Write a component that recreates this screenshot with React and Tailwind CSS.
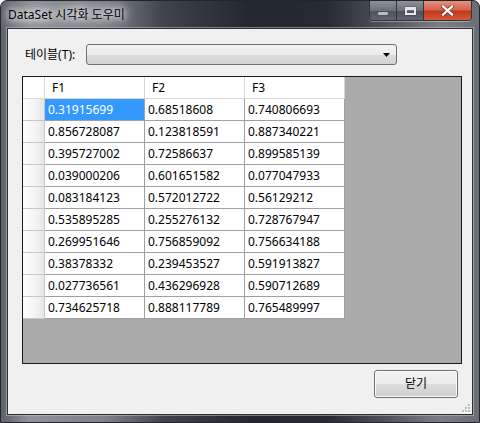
import React from "react";

const rows = [
  ["0.31915699", "0.68518608", "0.740806693"],
  ["0.856728087", "0.123818591", "0.887340221"],
  ["0.395727002", "0.72586637", "0.899585139"],
  ["0.039000206", "0.601651582", "0.077047933"],
  ["0.083184123", "0.572012722", "0.56129212"],
  ["0.535895285", "0.255276132", "0.728767947"],
  ["0.269951646", "0.756859092", "0.756634188"],
  ["0.38378332", "0.239453527", "0.591913827"],
  ["0.027736561", "0.436296928", "0.590712689"],
  ["0.734625718", "0.888117789", "0.765489997"],
];

const font = { fontFamily: '"Noto Sans", "Noto Sans CJK KR", sans-serif' };

const CaptionButtons = () => (
  <div className="absolute right-[7px] top-0 flex h-[20px] overflow-hidden rounded-b-[4px] border border-t-0 border-[#30343a] shadow-[0_1px_0_rgba(255,255,255,0.35)]">
    {/* minimize */}
    <div className="flex w-[27px] items-center justify-center border-r border-[#30343a] bg-[linear-gradient(180deg,#8d9298_0%,#6c7177_50%,#4e535a_51%,#5f646b_100%)]">
      <div className="mt-[5px] h-[3px] w-[10px] rounded-[1px] bg-[#b9bcc0] shadow-[0_0_1px_#222]" />
    </div>
    {/* maximize */}
    <div className="flex w-[27px] items-center justify-center border-r border-[#30343a] bg-[linear-gradient(180deg,#8d9298_0%,#6c7177_50%,#4e535a_51%,#5f646b_100%)]">
      <div className="h-[8px] w-[11px] border-2 border-t-[3px] border-[#e4e6e9] shadow-[0_0_1px_#222]" />
    </div>
    {/* close */}
    <div className="flex w-[47px] items-center justify-center bg-[linear-gradient(180deg,#e3937f_0%,#d4644c_45%,#c23a1e_55%,#d25a3c_100%)]">
      <svg width="13" height="11" viewBox="0 0 13 11">
        <path d="M2 1.5 L11 9.5 M11 1.5 L2 9.5" stroke="#5a1a10" strokeWidth="3.6" strokeLinecap="square" />
        <path d="M2 1.5 L11 9.5 M11 1.5 L2 9.5" stroke="#ffffff" strokeWidth="2.4" strokeLinecap="square" />
      </svg>
    </div>
  </div>
);

export default function App() {
  return (
    <div className="h-[423px] w-[480px] bg-white" style={font}>
      <div className="relative flex h-[423px] w-[480px] flex-col rounded-t-[7px] border border-[#22262c] bg-[linear-gradient(90deg,#5d6268_0%,#8f9398_6%,#7d8187_22%,#3f444b_34%,#23272e_52%,#262a31_68%,#4d5259_80%,#7b7f85_92%,#6a6e74_100%)]">
        {/* title bar */}
        <div className="flex h-[27px] shrink-0 items-center pl-[7px]">
          <span className="text-[12px] text-black [text-shadow:0_0_6px_#fff,0_0_10px_#fff,0_0_14px_#fff]">
            DataSet 시각화 도우미
          </span>
        </div>
        <CaptionButtons />

        {/* client area */}
        <div className="mx-[6px] mb-[7px] flex flex-1 flex-col border border-[#2b2f35] bg-[#f0f0f0] shadow-[0_0_0_1px_rgba(200,205,210,0.5)]">
          {/* table selector */}
          <div className="mt-[15px] flex h-[21px] items-center pl-[17px]">
            <span className="w-[61px] text-[12px] text-black">테이블(T):</span>
            <div className="relative h-[21px] w-[311px] rounded-[3px] border border-[#707070] bg-[linear-gradient(180deg,#f3f3f3_0%,#ebebeb_50%,#dddddd_51%,#d3d3d3_100%)]">
              <svg className="absolute right-[6px] top-[8px]" width="7" height="4" viewBox="0 0 7 4">
                <path d="M0 0 L7 0 L3.5 4 Z" fill="#000" />
              </svg>
            </div>
          </div>

          {/* grid */}
          <div className="ml-[14px] mt-[11px] h-[288px] w-[440px] border border-[#1a1a1a] bg-[#ababab]">
            <div className="flex">
              <div className="h-[22px] w-[22px] border-b border-r border-[#d8d8d8] bg-white" />
              {["F1", "F2", "F3"].map((h) => (
                <div
                  key={h}
                  className="flex h-[22px] w-[100px] items-center border-b border-r border-[#d8d8d8] bg-white pl-[7px] text-[12px] text-black"
                >
                  {h}
                </div>
              ))}
            </div>
            {rows.map((r, i) => (
              <div key={i} className="flex">
                <div className="h-[22px] w-[22px] border-b border-r border-[#c8c8c8] bg-[linear-gradient(90deg,#ffffff_0%,#f3f3f3_60%,#e6e6e6_100%)]" />
                {r.map((v, j) => {
                  const sel = i === 0 && j === 0;
                  return (
                    <div
                      key={j}
                      className={
                        sel
                          ? "flex h-[22px] w-[100px] items-center border-b border-r border-[#a0a0a0] bg-[#3399ff] pl-[3px] text-[12px] text-white"
                          : "flex h-[22px] w-[100px] items-center border-b border-r border-[#a0a0a0] bg-white pl-[3px] text-[12px] text-black"
                      }
                    >
                      {v}
                    </div>
                  );
                })}
              </div>
            ))}
          </div>

          {/* footer */}
          <div className="relative flex flex-1 justify-end pr-[14px] pt-[6px]">
            <div className="flex h-[28px] w-[84px] items-center justify-center rounded-[3px] border border-[#707070] bg-[linear-gradient(180deg,#f2f2f2_0%,#ebebeb_50%,#dddddd_51%,#cfcfcf_100%)] text-[12px] text-black shadow-[inset_0_0_0_1px_#fcfcfc]">
              닫기
            </div>
            <svg className="absolute bottom-[1px] right-[1px]" width="12" height="12" viewBox="0 0 12 12">
              {[
                [9, 3],
                [9, 6],
                [6, 6],
                [9, 9],
                [6, 9],
                [3, 9],
              ].map(([x, y], k) => (
                <g key={k}>
                  <rect x={x + 1} y={y + 1} width="2" height="2" fill="#ffffff" />
                  <rect x={x} y={y} width="2" height="2" fill="#b8b8b8" />
                </g>
              ))}
            </svg>
          </div>
        </div>
      </div>
    </div>
  );
}
